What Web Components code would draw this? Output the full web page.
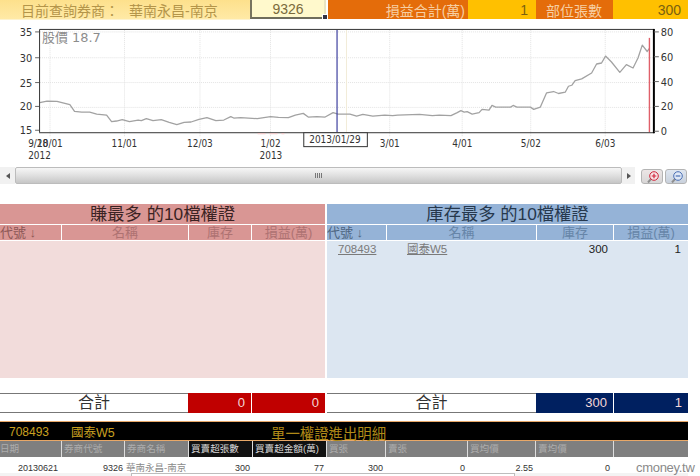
<!DOCTYPE html>
<html lang="zh-Hant">
<head>
    <meta charset="UTF-8">
    <title>權證進出</title>
    <style>
        html, body {
            margin: 0;
            background: #fff;
            overflow: hidden;
        }
        body {
            font-family: "Liberation Sans", "Noto Sans CJK TC", sans-serif;
        }
    </style>
</head>
<body>
    <broker-page>
        <top-bar></top-bar>
        <price-chart></price-chart>
        <div slot="tables">
            <rank-table heading="賺最多 的10檔權證" theme="red" cols="61px 127px 63px 74px" total-a="0" total-b="0"></rank-table>
            <rank-table heading="庫存最多 的10檔權證" theme="blue" cols="59px 150px 77px 75px" total-a="300" total-b="1">
                <rank-row code="708493" name="國泰W5" stock="300" profit="1"></rank-row>
            </rank-table>
        </div>
        <detail-table slot="detail"></detail-table>
    </broker-page>

    <script>
        const CJK = '"Liberation Sans", "Noto Sans CJK TC", sans-serif';

        function makeRoot(el, css, html) {
            el.attachShadow({mode: 'open'});
            el.shadowRoot.innerHTML = `<style>${css}</style>${html}`;
        }

        class BrokerPage extends HTMLElement {
            constructor() {
                super();
                makeRoot(this, `
                    :host { display: flex; flex-direction: column; width: 688px; height: 476px; position: relative; font-family: ${CJK}; }
                    .tables { margin-top: 20px; }
                    ::slotted([slot=tables]) { display: grid; grid-template-columns: 325px 361px; gap: 2px; }
                    .watermark { position: absolute; left: 636px; top: 460px; font-size: 13px; color: #8a8a8a; letter-spacing: -.3px; white-space: nowrap; }
                `, `
                    <slot></slot>
                    <div class="tables"><slot name="tables"></slot></div>
                    <slot name="detail"></slot>
                    <div class="watermark">cmoney.tw</div>
                `);
            }
        }

        class TopBar extends HTMLElement {
            constructor() {
                super();
                makeRoot(this, `
                    :host { display: grid; grid-template-columns: 250px 76px 2px 140px 68px 77px 75px; height: 20px; font-size: 14px; }
                    div { display: flex; align-items: center; height: 19px; box-sizing: border-box; white-space: nowrap; }
                    .label { background: linear-gradient(#fde08c, #ffeaa6); color: #b4954a; padding-left: 21px; gap: 10px; box-shadow: 0 1px 0 #fdf3cf; }
                    .input { background: #fff9cc; color: #7a6a3c; justify-content: center; font-size: 14px; padding-top: 1px; border: 2px solid #e8e4cc; border-left-color: #77745f; border-right-color: #e9e5c2; border-bottom-color: #6f6d5c; border-top: 0; position: relative; }
                    .handle { position: absolute; right: -4px; bottom: -3px; width: 4px; height: 4px; background: #334; border: 1px solid #fff; }
                    .orange { background: #e46c0a; color: #f6cfa4; justify-content: flex-end; }
                    .yellow { background: #ffc000; color: #7a6010; justify-content: flex-end; font-size: 14px; }
                `, `
                    <div class="label"><span>目前查詢券商：</span><span>華南永昌-南京</span></div>
                    <div class="input">9326<span class="handle"></span></div>
                    <span></span>
                    <div class="orange" style="padding-right:3px">損益合計(萬)</div>
                    <div class="yellow" style="padding-right:8px">1</div>
                    <div class="orange" style="padding-right:11px">部位張數</div>
                    <div class="yellow" style="padding-right:7px">300</div>
                `);
            }
        }

        // page coordinates of the price line, read off the reference
        const LINE = '37.7,103.3 45,101.7 55,102 63,104 68,105.3 72.7,112 80,112.7 88,112.7 95,114.7 105,115.7 110,122.3 115,121.7 120.7,120.3 128,122.3 136.7,120.7 140,121.3 145,119.3 151.7,121.3 160,120.3 168,123 175.7,125.3 183,123 190,122.7 198,120 206,118.3 215,121.3 223,120.7 230,117.3 233,118.7 240,118.3 256.7,119.3 270,117.3 278,118 288,118.3 295,115.7 303,114 308,117.7 316.7,117.3 325,117.7 333,113.3 338,114.7 350,114.7 356.7,116.7 363,115 373,116.7 385,115.7 393,116.3 398,115.7 420,115 433,116.3 440,115.7 451.7,116.3 458,113.3 461.7,111.3 465,112.7 468,112.3 473,114.7 480,113.3 483,110 490,110.7 493,106 496.7,107.7 511.7,107.7 514.3,106 518,107.7 531.7,107.7 535,110 541.7,107.7 548,93.3 555,92 560,94 566.7,92.7 570,86.7 573.3,85.7 576.7,81 583.3,79.3 593.3,73.3 598.3,64.3 603.3,63.3 607.3,56.3 613.3,62.3 621.7,72.7 628.3,65 635,68.3 640,58.3 644.3,45.3 649.3,51.7 651.7,48.3';

        class PriceChart extends HTMLElement {
            constructor() {
                super();
                const gridX = [48, 123, 199, 270, 390, 463, 532, 607];
                const rowsY = [32, 58, 83, 108];
                const grid = gridX.map(x => `<line x1="${x}" y1="30" x2="${x}" y2="137"/>`).join('')
                    + rowsY.map(y => `<line x1="38" y1="${y}" x2="656" y2="${y}"/>`).join('');
                const left = [[35, 32], [30, 58], [25, 83], [20, 107], [15, 131]];
                const right = [[80, 32], [60, 57], [40, 82], [20, 107], [0, 132]];
                const axis = left.map(([v, y]) => `<text class="num" x="30" y="${y + 4}" text-anchor="end">${v}</text><line class="tick" x1="33" y1="${y}" x2="37" y2="${y}"/>`).join('')
                    + right.map(([v, y]) => `<text class="num" x="663" y="${y + 4}">${v}</text><line class="tick" x1="656" y1="${y}" x2="661" y2="${y}"/>`).join('');
                const dates = [[26, '9/28'], [35, '10/01'], [110, '11/01'], [186, '12/03'], [260, '1/02'], [380, '3/01'], [453, '4/01'], [522, '5/02'], [597, '6/03']];
                const labels = dates.map(([x, t]) => `<text x="${x}" y="148">${t}</text>`).join('')
                    + '<text x="26" y="160">2012</text><text x="259" y="160">2013</text>';
                makeRoot(this, `
                    :host { display: flex; flex-direction: column; height: 164px; }
                    svg { display: block; height: 148px; width: 688px; }
                    text { font-family: "DejaVu Sans Condensed", "DejaVu Sans", sans-serif; font-stretch: condensed; font-size: 10px; fill: #333; }
                    text.num { font-size: 11px; }
                    .grid line { stroke: #e2e2e2; stroke-dasharray: 1 1; }
                    .tick { stroke: #666; }
                    text.legend { font-family: "DejaVu Sans", "Noto Sans CJK TC", sans-serif; font-stretch: normal; font-size: 13px; fill: #8c8c8c; }
                    .tip { fill: #fff; stroke: #333; }
                    .bar { display: flex; height: 17px; align-items: stretch; }
                    .arrow { background: #f1f1f1; display: flex; align-items: center; justify-content: center; }
                    .thumb { flex: 1; display: flex; align-items: center; justify-content: center; background: linear-gradient(#f6f6f6, #e2e2e2 45%, #c6c6c6); border: 1px solid #bcbcbc; border-radius: 2px; }
                    .grip { width: 7px; height: 5px; background: repeating-linear-gradient(90deg, #777 0 1px, transparent 1px 2px); }
                    .btns { display: flex; gap: 2px; margin: 0 1px 0 6px; padding-top: 2px; }
                `, `
                    <svg viewBox="0 20 688 148" width="688" height="148">
                        <rect x="38" y="30" width="618" height="103" fill="#fff"/>
                        <g class="grid">${grid}</g>
                        <line x1="346.5" y1="30" x2="346.5" y2="133" stroke="#f2ecd8"/>
                        <polyline points="${LINE}" fill="none" stroke="#a2a2a2" stroke-width="1.3" stroke-linejoin="round"/>
                        <line x1="337" y1="30" x2="337" y2="133" stroke="#3c3f9e" stroke-width="1.2"/>
                        <line x1="651.5" y1="38" x2="651.5" y2="133" stroke="#e0606a" stroke-width="1.4"/>
                        <path d="M37.5 133V29.5H656" fill="none" stroke="#333"/>
                        <line x1="37" y1="133.5" x2="656" y2="133.5" stroke="#333"/>
                        <line x1="656" y1="29" x2="656" y2="134" stroke="#000" stroke-width="2"/>
                        <line x1="257" y1="134.5" x2="284" y2="134.5" stroke="#f2c4c4" stroke-dasharray="8 4"/>
                        ${axis}${labels}
                        <text class="legend" x="40" y="42">股價 18.7</text>
                        <rect class="tip" x="303.5" y="133.5" width="64" height="14"/>
                        <text x="309" y="144">2013/01/29</text>
                    </svg>
                    <div class="bar">
                        <div class="arrow" style="width:15px"><svg style="width:4px;height:6px" viewBox="0 0 4 6"><path d="M4 0V6L0 3Z" fill="#555"/></svg></div>
                        <div class="thumb"><span class="grip"></span></div>
                        <div class="arrow" style="width:13px"><svg style="width:4px;height:6px" viewBox="0 0 4 6"><path d="M0 0V6L4 3Z" fill="#555"/></svg></div>
                        <div class="btns">
                            <zoom-btn kind="in"></zoom-btn>
                            <zoom-btn kind="out"></zoom-btn>
                        </div>
                    </div>
                `);
            }
        }

        class ZoomBtn extends HTMLElement {
            constructor() {
                super();
                const zoomIn = this.getAttribute('kind') === 'in';
                const c = zoomIn ? '#d0263c' : '#4a6fb5';
                const tint = zoomIn ? '#f7e4e6' : '#dfe8f6';
                const mark = zoomIn ? 'M12 3.7v4.6M9.7 6h4.6' : 'M9.7 6h4.6';
                makeRoot(this, `
                    :host { display: block; width: 22px; height: 15px; box-sizing: border-box; border: 1px solid #b4b4b4; border-radius: 3px; background: linear-gradient(${zoomIn ? '#ece6e6, #d8d6d6' : '#dfe6f0, #c9d1dc'}); }
                    svg { display: block; width: 20px; height: 13px; }
                `, `
                    <svg viewBox="0 0 20 13">
                        <path d="M9 9 6 12.5" stroke="#8f8f8f" stroke-width="2"/>
                        <circle cx="12" cy="6" r="4.3" fill="${tint}" stroke="${c}" stroke-width="1"/>
                        <path d="${mark}" stroke="${c}" stroke-width="1.2"/>
                    </svg>
                `);
            }
        }

        const THEMES = {
            red: {head: '#d99694', body: '#f2dcdb', title: '#3b2323', label: '#ae7272', first: '#8c5656', total: '#c00000'},
            blue: {head: '#95b3d7', body: '#dce6f1', title: '#26384d', label: '#6685a8', first: '#4d6480', total: '#002060'}
        };

        class RankTable extends HTMLElement {
            constructor() {
                super();
                const t = THEMES[this.getAttribute('theme')];
                const cols = this.getAttribute('cols');
                const widths = cols.split(' ').map(parseFloat);
                makeRoot(this, `
                    :host { display: block; --cols: ${cols}; }
                    .title { height: 20px; line-height: 20px; background: ${t.head}; color: ${t.title}; text-align: center; font-size: 17.3px; white-space: nowrap; }
                    .head { display: grid; grid-template-columns: var(--cols); height: 15px; margin-top: 1px; background: ${t.head}; }
                    .head span { font-size: 13px; line-height: 15px; text-align: center; color: ${t.label}; border-left: 1px solid #fff; overflow: hidden; white-space: nowrap; }
                    .head span:first-child { text-align: left; border-left: 0; color: ${t.first}; }
                    .body { height: 137px; margin-top: 1px; background: ${t.body}; }
                    .foot { display: grid; grid-template-columns: ${widths[0] + widths[1]}px ${widths[2]}px ${widths[3]}px; height: 19px; margin-top: 15px; }
                    .foot div { line-height: 19px; }
                    .sum { text-align: center; font-size: 16px; color: #333; border: solid #777; border-width: 1px 0; line-height: 18px !important; box-sizing: border-box; }
                    .val { background: ${t.total}; color: #f4d9d9; text-align: right; padding-right: 6px; font-size: 13px; }
                    .val + .val { border-left: 1px solid #fff; }
                `, `
                    <div class="title">${this.getAttribute('heading')}</div>
                    <div class="head"><span>代號 ↓</span><span>名稱</span><span>庫存</span><span>損益(萬)</span></div>
                    <div class="body"><slot></slot></div>
                    <div class="foot">
                        <div class="sum">合計</div>
                        <div class="val">${this.getAttribute('total-a')}</div>
                        <div class="val">${this.getAttribute('total-b')}</div>
                    </div>
                `);
            }
        }

        class RankRow extends HTMLElement {
            constructor() {
                super();
                makeRoot(this, `
                    :host { display: grid; grid-template-columns: var(--cols); height: 16px; font-size: 11.5px; line-height: 16px; color: #222; }
                    .link { color: #7a7a7a; text-decoration: underline; }
                    .num { text-align: right; padding-right: 7px; }
                `, `
                    <span class="link" style="padding-left:11px">${this.getAttribute('code')}</span>
                    <span class="link" style="padding-left:21px">${this.getAttribute('name')}</span>
                    <span class="num" style="padding-right:5px">${this.getAttribute('stock')}</span>
                    <span class="num">${this.getAttribute('profit')}</span>
                `);
            }
        }

        class DetailTable extends HTMLElement {
            constructor() {
                super();
                const widths = [61, 63, 64, 64, 74, 59, 82, 68, 78, 75];
                const heads = ['日期', '券商代號', '券商名稱', '買賣超張數', '買賣超金額(萬)', '買張', '賣張', '買均價', '賣均價', ''];
                const cells = ['20130621', '9326', '華南永昌-南京', '300', '77', '300', '0', '2.55', '0', ''];
                const pad = [3, 1, 0, 2, 2, 2, 2, 2, 3, 0];
                const cols = widths.map(w => w + 'px').join(' ');
                makeRoot(this, `
                    :host { display: block; margin-top: 9px; }
                    .bar { display: grid; grid-template-columns: 71px 200px 1fr; align-items: center; height: 20px; box-sizing: border-box; background: #000; border: solid #e8a868; border-width: 1px 0; color: #c9a020; font-size: 12.5px; white-space: nowrap; position: relative; }
                    .bar span:first-child { padding-left: 9px; font-size: 12px; }
                    .title { position: absolute; left: 271px; top: 0; font-size: 14.4px; color: #b08a18; }
                    .row { display: grid; grid-template-columns: ${cols}; }
                    .head span { height: 16px; line-height: 15px; font-size: 9.6px; background: #7f7f7f; color: #adadad; padding-left: 2px; border-left: 1px solid #ddd; box-sizing: border-box; white-space: nowrap; overflow: hidden; }
                    .head span:first-child { border-left: 0; padding-left: 0; }
                    .head span.dark { background: #111; color: #d8d8d8; }
                    .data span { height: 16px; line-height: 22px; font-size: 9px; color: #333; text-align: right; white-space: nowrap; }
                    .data span.name { text-align: left; padding-left: 2px; font-size: 9.5px; color: #8a8a8a; }
                    .strip { display: flex; height: 3px; background: #f3f3f3; }
                    .strip i { display: block; margin-left: 131px; width: 384px; box-sizing: border-box; background: #fff; border: 1px solid #bdbdbd; border-bottom: 0; }
                `, `
                    <div class="bar"><span>708493</span><span>國泰W5</span><span class="title">單一權證進出明細</span></div>
                    <div class="row head">${heads.map((h, i) => `<span class="${i === 3 || i === 4 ? 'dark' : ''}">${h}</span>`).join('')}</div>
                    <div class="row data">${cells.map((c, i) => `<span class="${i === 2 ? 'name' : ''}" style="padding-right:${pad[i]}px">${c}</span>`).join('')}</div>
                    <div class="strip"><i></i></div>
                `);
            }
        }

        customElements.define('zoom-btn', ZoomBtn);
        customElements.define('top-bar', TopBar);
        customElements.define('price-chart', PriceChart);
        customElements.define('rank-row', RankRow);
        customElements.define('rank-table', RankTable);
        customElements.define('detail-table', DetailTable);
        customElements.define('broker-page', BrokerPage);
    </script>
</body>
</html>
